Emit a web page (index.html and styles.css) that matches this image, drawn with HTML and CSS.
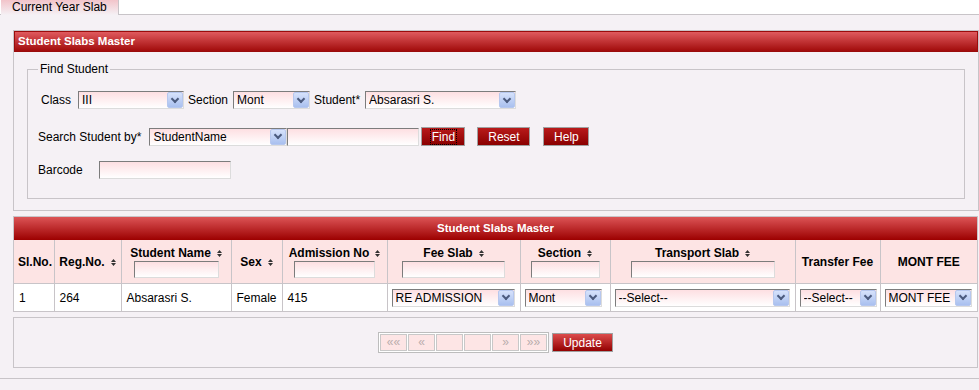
FILE: index.html
```html
<!DOCTYPE html>
<html lang="en">
<head>
  <meta charset="UTF-8" />
  <meta name="viewport" content="width=device-width, initial-scale=1.0"/>
  <title>Student Slabs Master</title>
  <link rel="stylesheet" href="styles.css">
</head>
<body>

<div class="tabs">
  <div class="tab">Current Year Slab</div>
</div>

<div class="tab-body">

  <!-- FIND STUDENT -->
  <div class="panel">
    <div class="panel-head">Student Slabs Master</div>
    <fieldset class="find">
      <legend>Find Student</legend>

      <div class="row row-one">
        <label>Class</label>
        <div class="combo cb-class"><span>III</span><i class="arrow"></i></div>
        <label class="lb-section">Section</label>
        <div class="combo cb-section"><span>Mont</span><i class="arrow"></i></div>
        <label class="lb-student">Student*</label>
        <div class="combo cb-student"><span>Absarasri S.</span><i class="arrow"></i></div>
      </div>

      <div class="row row-two">
        <label>Search Student by*</label>
        <div class="combo cb-search"><span>StudentName</span><i class="arrow"></i></div>
        <input type="text" class="txt txt-search" />
        <button class="btn btn-find"><span class="focus">Find</span></button>
        <button class="btn btn-reset">Reset</button>
        <button class="btn btn-help">Help</button>
      </div>

      <div class="row row-three">
        <label>Barcode</label>
        <input type="text" class="txt txt-barcode" />
      </div>
    </fieldset>
  </div>

  <!-- SLAB GRID -->
  <div class="grid">
    <div class="grid-head">Student Slabs Master</div>
    <table>
      <colgroup>
        <col class="c-sl"><col class="c-reg"><col class="c-name"><col class="c-sex"><col class="c-adm">
        <col class="c-fee"><col class="c-sec"><col class="c-trans"><col class="c-tfee"><col>
      </colgroup>
      <tr>
        <th>Sl.No.</th>
        <th>Reg.No.<svg class="sort" width="5" height="7" viewBox="0 0 5 7"><path d="M0 3h5L2.5 0zM0 4h5L2.5 7z"/></svg></th>
        <th>Student Name<svg class="sort" width="5" height="7" viewBox="0 0 5 7"><path d="M0 3h5L2.5 0zM0 4h5L2.5 7z"/></svg>
          <input type="text" class="txt filter f-name" /></th>
        <th>Sex<svg class="sort" width="5" height="7" viewBox="0 0 5 7"><path d="M0 3h5L2.5 0zM0 4h5L2.5 7z"/></svg></th>
        <th>Admission No<svg class="sort" width="5" height="7" viewBox="0 0 5 7"><path d="M0 3h5L2.5 0zM0 4h5L2.5 7z"/></svg>
          <input type="text" class="txt filter f-adm" /></th>
        <th>Fee Slab<svg class="sort" width="5" height="7" viewBox="0 0 5 7"><path d="M0 3h5L2.5 0zM0 4h5L2.5 7z"/></svg>
          <input type="text" class="txt filter f-fee" /></th>
        <th>Section<svg class="sort" width="5" height="7" viewBox="0 0 5 7"><path d="M0 3h5L2.5 0zM0 4h5L2.5 7z"/></svg>
          <input type="text" class="txt filter f-sec" /></th>
        <th>Transport Slab<svg class="sort" width="5" height="7" viewBox="0 0 5 7"><path d="M0 3h5L2.5 0zM0 4h5L2.5 7z"/></svg>
          <input type="text" class="txt filter f-trans" /></th>
        <th>Transfer Fee</th>
        <th>MONT FEE</th>
      </tr>
      <tr>
        <td>1</td>
        <td>264</td>
        <td>Absarasri S.</td>
        <td>Female</td>
        <td>415</td>
        <td class="pick"><div class="combo cb-fee"><span>RE ADMISSION</span><i class="arrow"></i></div></td>
        <td class="pick"><div class="combo cb-sec"><span>Mont</span><i class="arrow"></i></div></td>
        <td class="pick"><div class="combo cb-trans"><span>--Select--</span><i class="arrow"></i></div></td>
        <td class="pick"><div class="combo cb-tfee"><span>--Select--</span><i class="arrow"></i></div></td>
        <td class="pick"><div class="combo cb-mont"><span>MONT FEE</span><i class="arrow"></i></div></td>
      </tr>
    </table>
  </div>

  <!-- PAGER -->
  <div class="pager-panel">
    <div class="pager">
      <span>««</span><span>«</span><span></span><span></span><span>»</span><span>»»</span>
    </div>
    <button class="btn btn-update">Update</button>
  </div>

</div>

</body>
</html>
```

FILE: styles.css
```css
body {
  margin: 0;
  font-family: "Liberation Sans", Arial, sans-serif;
  font-size: 12px;
  color: #000;
  background: #f5f1f5;
}
.tabs {
  display: flex;
  height: 14px;
  background: #fff;
  border-bottom: 1px solid #c8c4c8;
}
.tab {
  width: 106px;
  height: 15px;
  margin-left: 1px;
  padding-left: 11px;
  line-height: 14px;
  background: linear-gradient(#f2c4ca, #f5f1f5);
  border-right: 1px solid #c8c4c8;
}
.tab-body {
  height: 348px;
  padding: 15px 0 0 13px;
  border-bottom: 1px solid #c8c4c8;
}

/* combos and inputs */
.combo {
  display: flex;
  align-items: center;
  box-sizing: border-box;
  height: 18px;
  padding-left: 3px;
  border: 1px solid;
  border-color: #7c7c7c #dcdcdc #dcdcdc #7c7c7c;
  background: linear-gradient(#fddfe2, #fff);
  text-align: left;
  font-weight: normal;
}
.combo span {
  flex: 1;
  overflow: hidden;
  white-space: nowrap;
}
.combo .arrow {
  display: flex;
  align-items: center;
  justify-content: center;
  box-sizing: border-box;
  width: 16px;
  height: 16px;
  border: 1px solid #b6c7ee;
  border-radius: 2px;
  background: linear-gradient(#d6e2fb, #a9c0ef);
}
.combo .arrow::after {
  content: "";
  width: 4px;
  height: 4px;
  margin-top: -3px;
  border-right: 2px solid #4b5b7e;
  border-bottom: 2px solid #4b5b7e;
  transform: rotate(45deg);
}
.txt {
  box-sizing: border-box;
  height: 18px;
  margin: 0;
  padding: 0 3px;
  border: 1px solid;
  border-color: #7c7c7c #dcdcdc #dcdcdc #7c7c7c;
  background: linear-gradient(#fddfe2, #fff);
  font: inherit;
}

/* buttons */
.btn {
  box-sizing: border-box;
  height: 19px;
  padding: 0;
  border: 1px solid #a0a0a0;
  background: linear-gradient(#b81a1a, #8a0000);
  color: #fff;
  font-family: inherit;
  font-size: 12px;
}
.btn-find { width: 44px; margin-left: 2px; }
.btn-reset { width: 53px; margin-left: 12px; }
.btn-help { width: 46px; margin-left: 13px; }
.focus {
  padding: 0 1px;
  border: 1px dotted #000;
  line-height: 14px;
}

/* panel */
.panel {
  border: 1px solid #c8c4c8;
}
.panel-head {
  height: 19px;
  line-height: 19px;
  padding-left: 3px;
  border: 1px solid #9a0c0c;
  background: linear-gradient(#e05a5e, #a10b0b);
  color: #fff;
  font-size: 11.5px;
  font-weight: bold;
}
.find {
  margin: 10px 13px 11px;
  padding: 0 10px 19px;
  border: 1px solid #c8c4c8;
}
.find legend {
  padding: 0 2px;
  line-height: 14px;
}
.row {
  display: flex;
  align-items: center;
}
.row-one {
  margin-top: 15px;
  padding-left: 3px;
}
.row-two {
  margin-top: 18px;
}
.row-three {
  margin-top: 15px;
}
.cb-class { width: 106px; margin-left: 7px; }
.lb-section { margin-left: 4px; }
.cb-section { width: 77px; margin-left: 5px; }
.lb-student { margin-left: 4px; }
.cb-student { width: 151px; margin-left: 5px; }
.cb-search { width: 138px; margin-left: 8px; }
.txt-search { width: 132px; }
.txt-barcode { width: 132px; margin-left: 16px; }

/* grid */
.grid {
  margin-top: 5px;
  margin-right: 1px;
  border: 1px solid #c8c4c8;
}
.grid-head {
  height: 23px;
  line-height: 23px;
  text-align: center;
  background: linear-gradient(#dc5456, #9c0000);
  color: #fff;
  font-size: 11.5px;
  font-weight: bold;
}
table {
  width: 100%;
  border-collapse: collapse;
  table-layout: fixed;
}
.c-sl { width: 40px; }
.c-reg { width: 67px; }
.c-name { width: 110px; }
.c-sex { width: 51px; }
.c-adm { width: 105px; }
.c-fee { width: 133px; }
.c-sec { width: 90px; }
.c-trans { width: 185px; }
.c-tfee { width: 85px; }
th, td {
  border: 1px solid #c8c4c8;
  padding: 0 4px;
  vertical-align: middle;
}
th {
  height: 43px;
  border-top: none;
  background: #fde4e4;
  font-weight: bold;
  line-height: 14px;
  text-align: center;
  white-space: nowrap;
}
td {
  height: 27px;
  padding-left: 5px;
  border-bottom: none;
  background: #fff;
  white-space: nowrap;
}
td.pick {
  padding-left: 4px;
}
th:first-child, td:first-child {
  border-left: none;
}
th:last-child, td:last-child {
  border-right: none;
}
.sort {
  margin-left: 6px;
  fill: #333;
}
.filter {
  display: block;
  height: 17px;
  margin: 1px auto 0;
}
.f-name { width: 85px; }
.f-adm { width: 81px; }
.f-fee { width: 103px; }
.f-sec { width: 69px; }
.f-trans { width: 144px; }
.cb-fee { width: 123px; }
.cb-sec { width: 77px; }
.cb-trans { width: 175px; }
.cb-tfee { width: 77px; }
.cb-mont { width: 87px; }

/* pager */
.pager-panel {
  display: flex;
  align-items: center;
  justify-content: center;
  gap: 3px;
  height: 49px;
  margin-top: 5px;
  margin-right: 1px;
  border: 1px solid #c8c4c8;
}
.pager {
  display: flex;
  gap: 1px;
  padding: 1px;
  border: 1px solid #bdbdbd;
  background: #fff;
}
.pager span {
  width: 25px;
  height: 15px;
  border: 1px solid #c8c8c8;
  background: #fde5e5;
  color: #b9adad;
  font-size: 12px;
  line-height: 15px;
  text-align: center;
}
.btn-update {
  width: 61px;
  background: linear-gradient(#dc4c4c, #930000);
}
```
